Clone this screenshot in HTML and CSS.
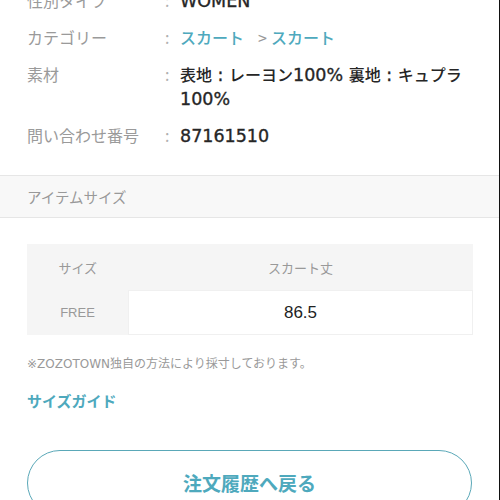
FILE: index.html
```html
<!DOCTYPE html>
<html lang="ja">
<head>
<meta charset="utf-8">
<link rel="stylesheet" href="styles.css">
</head>
<body>
<div class="page">
  <dl class="spec">
    <div class="row"><dt>性別タイプ</dt><dd class="colon">:</dd><dd class="val"><span class="lat">WOMEN</span></dd></div>
    <div class="row"><dt>カテゴリー</dt><dd class="colon">:</dd><dd class="val link"><span>スカート</span><span class="chev">&gt;</span><span>スカート</span></dd></div>
    <div class="row"><dt>素材</dt><dd class="colon">:</dd><dd class="val">表地<span class="lat"> : </span>レーヨン<span class="lat">100% </span>裏地<span class="lat"> : </span>キュプラ<span class="lat">100%</span></dd></div>
    <div class="row"><dt>問い合わせ番号</dt><dd class="colon">:</dd><dd class="val"><span class="lat">87161510</span></dd></div>
  </dl>
  <div class="section-head">アイテムサイズ</div>
  <div class="size-body">
    <table class="size-table">
      <tr class="head"><th class="c1">サイズ</th><th>スカート丈</th></tr>
      <tr class="data"><th class="c1">FREE</th><td>86.5</td></tr>
    </table>
    <p class="note">※ZOZOTOWN独自の方法により採寸しております。</p>
    <a class="guide">サイズガイド</a>
    <div class="btn">注文履歴へ戻る</div>
  </div>
</div>
</body>
</html>
```
FILE: styles.css
```css
html, body { margin: 0; padding: 0; background: #fff; overflow: hidden; }
body { font-family: "Noto Sans CJK JP", "Noto Sans", sans-serif; color: #333; }
.page { width: 499px; height: 500px; border-right: 1px solid #111; overflow: hidden; }
.spec { margin: -19px 0 0; padding: 0 0 0 27px; }
.row { display: grid; grid-template-columns: 138px 15px 1fr; padding: 6.5px 0; font-size: 16px; line-height: 24px; }
.row dt { color: #9a9a9a; margin: 0; }
.row dd { margin: 0; }
.colon { color: #b0b0b0; }
.val { font-size: 16px; color: #262626; font-weight: 500; padding-right: 20px; }
.lat { font-family: "DejaVu Sans", sans-serif; font-size: 17.5px; line-height: 16px; font-weight: 400; -webkit-text-stroke: 0.35px #262626; }
.link { color: #4ea9bd; }
.chev { color: #999; margin: 0 4px 0 14px; font-weight: 400; }
.section-head { margin-top: 22px; height: 41px; line-height: 41px; background: #f8f8f8; border-top: 1px solid #e6e6e6; border-bottom: 1px solid #e6e6e6; padding-left: 27px; font-size: 14.5px; color: #999; }
.size-body { padding: 26px 27px 0; }
.size-table { width: 446px; border-collapse: collapse; font-size: 13px; font-family: "Liberation Sans", "Noto Sans CJK JP", sans-serif; }
.size-table th, .size-table td { font-weight: 400; color: #999; text-align: center; padding: 0; }
.size-table .head th { height: 46px; background: #f5f5f5; }
.size-table .data th, .size-table .data td { height: 43px; }
.size-table .data th { background: #f5f5f5; }
.size-table .c1 { width: 101px; }
.size-table .data td { background: #fff; color: #222; font-size: 17px; border: 1px solid #f0f0f0; }
.note { margin: 20px 0 0; font-size: 12px; line-height: 18px; color: #999; font-family: "DejaVu Sans", "Noto Sans CJK JP", sans-serif; }
.guide { display: block; margin-top: 18px; font-size: 15px; line-height: 20px; font-weight: 700; color: #4ea9bd; }
.btn { margin-top: 39px; height: 64px; border: 1px solid #5aa8b8; border-radius: 34px; text-align: center; line-height: 64px; font-size: 19px; font-weight: 700; color: #4ea9bd; }
```
